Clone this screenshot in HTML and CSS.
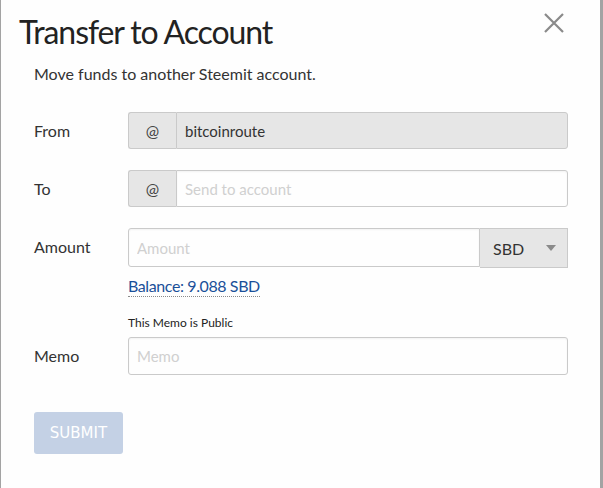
FILE: index.html
```html
<!DOCTYPE html>
<html lang="en">
<head>
    <meta charset="UTF-8">
    <meta name="viewport" content="width=device-width, initial-scale=1.0">
    <title>Transfer to Account</title>
    <link rel="stylesheet" href="styles.css">
</head>
<body>
    <div class="modal">
        <button class="close-btn" aria-label="Close">
            <svg width="20" height="20" viewBox="0 0 20 20">
                <path d="M1 1 L19 19 M19 1 L1 19" stroke="#8a8a8a" stroke-width="2.2" fill="none"/>
            </svg>
        </button>
        <h1 class="title">Transfer to Account</h1>
        <p class="subtitle">Move funds to another Steemit account.</p>

        <form class="transfer-form">
            <div class="row">
                <label class="label">From</label>
                <div class="field">
                    <div class="input-group">
                        <span class="addon">@</span>
                        <input type="text" class="input disabled" value="bitcoinroute" disabled>
                    </div>
                </div>
            </div>

            <div class="row to-row">
                <label class="label">To</label>
                <div class="field">
                    <div class="input-group">
                        <span class="addon">@</span>
                        <input type="text" class="input" placeholder="Send to account">
                    </div>
                </div>
            </div>

            <div class="row amount-row">
                <label class="label">Amount</label>
                <div class="field">
                    <div class="input-group">
                        <input type="text" class="input amount" placeholder="Amount">
                        <div class="select">
                            <span>SBD</span>
                            <span class="caret"></span>
                        </div>
                    </div>
                    <a class="balance" href="#">Balance: 9.088 SBD</a>
                </div>
            </div>

            <div class="row memo-row">
                <label class="label">Memo</label>
                <div class="field">
                    <div class="memo-note">This Memo is Public</div>
                    <input type="text" class="input memo" placeholder="Memo">
                </div>
            </div>

            <button type="button" class="submit" disabled>SUBMIT</button>
        </form>
    </div>
</body>
</html>
```

FILE: styles.css
```css
/* Global */
* {
    margin: 0;
    padding: 0;
    box-sizing: border-box;
}

body {
    background: #a3a3a3;
    font-family: 'Lato', 'Open Sans', sans-serif;
    color: #333;
    height: 488px;
    overflow: hidden;
}

/* Modal */
.modal {
    position: relative;
    margin-left: 1px;
    width: 599px;
    height: 488px;
    background: #fefefe;
    padding: 12px 35px 0 33px;
}

.close-btn {
    position: absolute;
    top: 13px;
    right: 36px;
    border: none;
    background: none;
    cursor: pointer;
    line-height: 0;
}

.title {
    margin-left: -15px;
    font-size: 32px;
    font-weight: 400;
    line-height: 40px;
    letter-spacing: -1.1px;
    color: #222;
}

.subtitle {
    margin-top: 10px;
    font-size: 16px;
    line-height: 24px;
    color: #333;
}

/* Form rows */
.transfer-form {
    margin-top: 26px;
}

.row {
    display: grid;
    grid-template-columns: 94px 440px;
    margin-bottom: 21px;
}

.label {
    font-size: 16px;
    line-height: 37px;
    color: #333;
}

.input-group {
    display: flex;
    height: 37px;
}

.addon {
    width: 48px;
    flex-shrink: 0;
    display: flex;
    align-items: center;
    justify-content: center;
    background: #e6e6e6;
    border: 1px solid #cacaca;
    border-right: none;
    border-radius: 3px 0 0 3px;
    font-size: 16px;
    color: #444;
}

.input {
    flex: 1;
    min-width: 0;
    height: 37px;
    border: 1px solid #cacaca;
    border-radius: 0 3px 3px 0;
    background: #fefefe;
    padding: 0 8px;
    font-family: inherit;
    font-size: 15px;
    color: #333;
    box-shadow: inset 0 1px 2px rgba(0, 0, 0, 0.05);
}

.input::placeholder {
    color: #d0d0d0;
}

.input.disabled {
    background: #e6e6e6;
    color: #333;
    box-shadow: none;
}

/* Amount */
.amount-row .input-group {
    height: 39px;
}

.amount-row {
    margin-bottom: 18px;
}

.amount {
    height: 39px;
    border-radius: 3px 0 0 3px;
}

.select {
    width: 88px;
    height: 40px;
    display: flex;
    align-items: center;
    justify-content: space-between;
    padding: 0 11px 0 13px;
    background: #e6e6e6;
    border: 1px solid #cacaca;
    border-left: none;
    font-size: 16px;
    color: #333;
}

.caret {
    width: 0;
    height: 0;
    border-left: 5px solid transparent;
    border-right: 5px solid transparent;
    border-top: 6px solid #8a8a8a;
}

.balance {
    display: inline-block;
    margin-top: 9px;
    font-size: 16px;
    line-height: 20px;
    letter-spacing: -0.4px;
    color: #1a5099;
    text-decoration: none;
    border-bottom: 1px dotted #8a8a8a;
}

/* Memo */
.memo-row {
    margin-bottom: 37px;
}

.memo-row .label {
    align-self: end;
    line-height: 38px;
}

.memo-note {
    font-size: 12px;
    line-height: 16px;
    margin-bottom: 6px;
    color: #222;
}

.memo {
    width: 100%;
    height: 38px;
    border-radius: 3px;
}

/* Submit */
.submit {
    width: 89px;
    height: 42px;
    border: none;
    border-radius: 3px;
    background: #c4d1e5;
    color: #fff;
    font-family: 'DejaVu Sans', sans-serif;
    font-size: 15px;
    cursor: not-allowed;
}
```
